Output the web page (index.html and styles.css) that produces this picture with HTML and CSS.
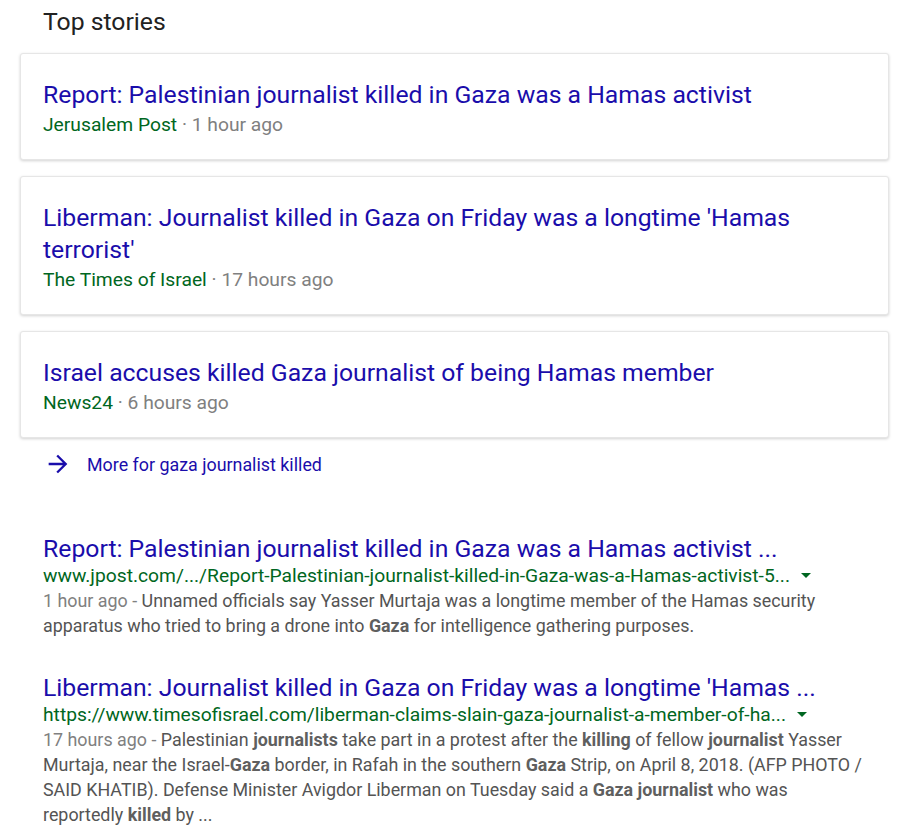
FILE: index.html
```html
<!DOCTYPE html>
<html>
<head>
<meta charset="utf-8">
<link rel="stylesheet" href="styles.css">
</head>
<body>
<div class="page">
  <h2 class="section-title">Top stories</h2>
  <div class="cards">
    <div class="card">
      <a class="card-title">Report: Palestinian journalist killed in Gaza was a Hamas activist</a>
      <div class="card-meta"><span class="source">Jerusalem Post</span> · 1 hour ago</div>
    </div>
    <div class="card">
      <a class="card-title">Liberman: Journalist killed in Gaza on Friday was a longtime 'Hamas terrorist'</a>
      <div class="card-meta"><span class="source">The Times of Israel</span> · 17 hours ago</div>
    </div>
    <div class="card">
      <a class="card-title">Israel accuses killed Gaza journalist of being Hamas member</a>
      <div class="card-meta"><span class="source">News24</span> · 6 hours ago</div>
    </div>
  </div>
  <a class="more">
    <svg class="more-arrow" viewBox="0 0 24 24" width="24" height="24"><path d="M12 4l-1.41 1.41L16.17 11H4v2h12.17l-5.58 5.59L12 20l8-8z" fill="#1a0dab"/></svg>
    <span>More for gaza journalist killed</span>
  </a>
  <div class="results">
    <div class="result">
      <a class="result-title">Report: Palestinian journalist killed in Gaza was a Hamas activist ...</a>
      <div class="result-url">www.jpost.com/.../Report-Palestinian-journalist-killed-in-Gaza-was-a-Hamas-activist-5...<span class="caret"></span></div>
      <div class="snippet"><span class="date">1 hour ago - </span>Unnamed officials say Yasser Murtaja was a longtime member of the Hamas security apparatus who tried to bring a drone into <b>Gaza</b> for intelligence gathering purposes.</div>
    </div>
    <div class="result">
      <a class="result-title">Liberman: Journalist killed in Gaza on Friday was a longtime 'Hamas ...</a>
      <div class="result-url">https://www.timesofisrael.com/liberman-claims-slain-gaza-journalist-a-member-of-ha...<span class="caret"></span></div>
      <div class="snippet"><span class="date">17 hours ago - </span>Palestinian <b>journalists</b> take part in a protest after the <b>killing</b> of fellow <b>journalist</b> Yasser Murtaja, near the Israel-<b>Gaza</b> border, in Rafah in the southern <b>Gaza</b> Strip, on April 8, 2018. (AFP PHOTO / SAID KHATIB). Defense Minister Avigdor Liberman on Tuesday said a <b>Gaza journalist</b> who was reportedly <b>killed</b> by ...</div>
    </div>
  </div>
</div>
</body>
</html>
```

FILE: styles.css
```css
html, body {
  margin: 0;
  padding: 0;
  background: #fff;
}
body {
  font-family: Roboto, Arial, sans-serif;
  color: #222;
}
.page {
  padding: 7px 12px 0 20px;
  width: 869px;
}
.section-title {
  margin: 0 0 16px 23px;
  font-size: 24.75px;
  font-weight: 400;
  line-height: 30px;
  color: #222;
}
.cards {
  display: flex;
  flex-direction: column;
  gap: 16px;
}
.card {
  border: 1px solid #e6e6e6;
  border-radius: 3px;
  box-shadow: 0 1px 3px rgba(0,0,0,0.18);
  padding: 25px 23px 21px 22px;
  background: #fff;
}
.card-title {
  display: block;
  font-size: 24.75px;
  line-height: 32px;
  color: #1a0dab;
  text-decoration: none;
}
.card-meta {
  margin-top: 1px;
  font-size: 19.25px;
  line-height: 26px;
  color: #808080;
}
.source {
  color: #006621;
}
.more {
  display: flex;
  align-items: center;
  height: 52px;
  padding-left: 24px;
  gap: 15px;
  color: #1a0dab;
  font-size: 17.875px;
  text-decoration: none;
}
.more-arrow {
  width: 28px;
  height: 28px;
}
.results {
  padding: 44px 0 0 23px;
  display: flex;
  flex-direction: column;
  gap: 35px;
}
.result-title {
  display: block;
  font-size: 24.75px;
  line-height: 29px;
  color: #1a0dab;
  text-decoration: none;
  white-space: nowrap;
}
.result-url {
  font-size: 19.25px;
  line-height: 25px;
  color: #006621;
  white-space: nowrap;
  display: flex;
  align-items: center;
}
.caret {
  display: inline-block;
  margin-left: 11px;
  border-left: 5px solid transparent;
  border-right: 5px solid transparent;
  border-top: 5px solid #006621;
}
.snippet {
  font-size: 17.875px;
  line-height: 25px;
  color: #545454;
  width: 825px;
}
.snippet b {
  color: #5f5f5f;
  font-weight: 700;
}
.date {
  color: #808080;
}
```
